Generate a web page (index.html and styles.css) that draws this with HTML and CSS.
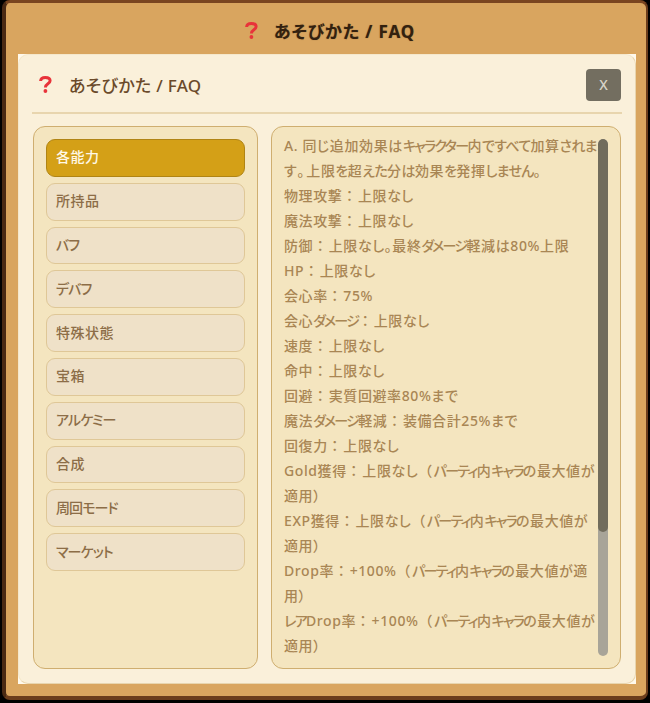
FILE: index.html
```html
<!DOCTYPE html>
<html lang="ja">
<head>
<meta charset="utf-8">
<title>あそびかた / FAQ</title>
<link rel="stylesheet" href="styles.css">
</head>
<body>
<div class="window">
  <header class="window-head">
    <svg class="q" viewBox="0 0 13 17"><path class="q-stroke" d="M1.6 5C1.8 2.6 3.6 1.5 6.3 1.5c2.8 0 4.8 1.2 4.8 3.3 0 3-4.7 3-4.7 6.6"/><circle class="q-dot" cx="6.4" cy="15" r="1.9"/></svg>
    <span class="window-title">あそびかた / FAQ</span>
  </header>
  <div class="panel-back">
  <section class="panel">
    <div class="panel-head">
      <svg class="q" viewBox="0 0 13 17"><path class="q-stroke" d="M1.6 5C1.8 2.6 3.6 1.5 6.3 1.5c2.8 0 4.8 1.2 4.8 3.3 0 3-4.7 3-4.7 6.6"/><circle class="q-dot" cx="6.4" cy="15" r="1.9"/></svg>
      <h1 class="panel-title">あそびかた / FAQ</h1>
      <button class="close">X</button>
    </div>
    <div class="columns">
      <nav class="side">
        <a class="tab active">各能力</a>
        <a class="tab">所持品</a>
        <a class="tab tab-kana">バフ</a>
        <a class="tab tab-kana">デバフ</a>
        <a class="tab">特殊状態</a>
        <a class="tab">宝箱</a>
        <a class="tab tab-kana">アルケミー</a>
        <a class="tab">合成</a>
        <a class="tab tab-kana">周回モード</a>
        <a class="tab tab-kana">マーケット</a>
      </nav>
      <div class="content">
        <div class="text">
          <p>A. 同じ追加効果は<span class="kana">キャラクター</span>内<span class="hira">ですべて</span>加算<span class="hira">されま</span><br><span class="open">す。</span>上限<span class="hira">を</span>超<span class="hira">えた</span>分<span class="hira">は</span>効果<span class="hira">を</span>発揮<span class="hira">しません。</span></p>
          <p>物理攻撃<span class="wide">：</span>上限なし</p>
          <p>魔法攻撃<span class="wide">：</span>上限なし</p>
          <p>防御<span class="wide">：</span>上限なし。最終<span class="kana">ダメージ</span>軽減は80%上限</p>
          <p>HP<span class="wide">：</span>上限なし</p>
          <p>会心率<span class="wide">：</span>75%</p>
          <p>会心<span class="kana">ダメージ</span><span class="wide">：</span>上限なし</p>
          <p>速度<span class="wide">：</span>上限なし</p>
          <p>命中<span class="wide">：</span>上限なし</p>
          <p>回避<span class="wide">：</span>実質回避率80%まで</p>
          <p>魔法<span class="kana">ダメージ</span>軽減<span class="wide">：</span>装備合計25%まで</p>
          <p>回復力<span class="wide">：</span>上限なし</p>
          <p>Gold獲得<span class="wide">：</span>上限なし<span class="wide">（</span><span class="kana">パーティ</span>内<span class="kana">キャラ</span>の最大値が<br>適用）</p>
          <p>EXP獲得<span class="wide">：</span>上限なし<span class="wide">（</span><span class="kana">パーティ</span>内<span class="kana">キャラ</span>の最大値が<br>適用）</p>
          <p>Drop率<span class="wide">：</span>+100%<span class="wide">（</span><span class="kana">パーティ</span>内<span class="kana">キャラ</span>の最大値が適<br>用）</p>
          <p><span class="kana">レア</span>Drop率<span class="wide">：</span>+100%<span class="wide">（</span><span class="kana">パーティ</span>内<span class="kana">キャラ</span>の最大値が<br>適用）</p>
        </div>
        <div class="track"><div class="thumb"></div></div>
      </div>
    </div>
  </section>
  </div>
</div>
</body>
</html>
```
FILE: styles.css
```css
* { box-sizing: border-box; }
html, body { margin: 0; height: 703px; overflow: hidden; background: #000; }
body {
  padding: 0 2px 3px;
  font-family: "Noto Sans", "Noto Sans CJK JP", sans-serif;
  font-feature-settings: "palt" 1;
  letter-spacing: 0.6px;
}
.window {
  height: 700px;
  display: flex;
  flex-direction: column;
  background: #d9a55f;
  border-style: solid;
  border-width: 3px 2px 4px 4px;
  border-color: #7a4520 #6b3d1c #6b3d1c #4a2a14;
  border-radius: 8px;
  padding: 0 10px 12px 12px;
}
.window-head {
  height: 51px;
  flex: none;
  display: flex;
  align-items: center;
  justify-content: center;
  gap: 16px;
  padding: 4px 0 0 6px;
}
.q { flex: none; width: 13px; height: 17px; }
.q-stroke { fill: none; stroke: #e8333a; stroke-width: 3; }
.q-dot { fill: #e8333a; }
.window-title {
  font-size: 17px;
  font-weight: 700;
  letter-spacing: 0.9px;
  color: #33210f;
  text-shadow: 0 0 1px rgba(51, 33, 15, 0.5);
}
.panel-back {
  flex: 1;
  display: flex;
  background: #fff9ec;
  min-height: 0;
}
.panel {
  flex: 1;
  display: flex;
  flex-direction: column;
  background: #faf0da;
  border: 1px solid #e8d5ae;
  border-top-color: #f5e8cc;
  border-left-color: #f5e8cc;
  border-radius: 10px;
  padding: 0 13px 14px;
}
.panel-head {
  height: 59px;
  flex: none;
  display: flex;
  align-items: center;
  gap: 17px;
  border-bottom: 2px solid #e8d5ae;
  padding: 2px 1px 0 7px;
}
.panel-title {
  flex: 1;
  margin: 0;
  font-size: 17px;
  font-weight: 500;
  letter-spacing: 0.3px;
  color: #6b4a2a;
}
.close {
  width: 35px;
  height: 32px;
  border: 0;
  border-radius: 4px;
  background: #736e60;
  color: #d8d4c8;
  font: 500 14px "Noto Sans", sans-serif;
  padding: 0;
}
.columns {
  flex: 1;
  display: flex;
  gap: 13px;
  margin-top: 12px;
  padding: 0 1px;
  min-height: 0;
}
.side, .content {
  background: #f4e5bf;
  border: 1px solid #cfae70;
  border-radius: 12px;
}
.side {
  width: 225px;
  flex: none;
  display: flex;
  flex-direction: column;
  gap: 6px;
  padding: 12px;
}
.tab {
  height: 37.8px;
  flex: none;
  display: flex;
  align-items: center;
  padding: 0 9px 3px;
  background: #efe1c8;
  border: 1px solid #dfc797;
  border-radius: 9px;
  font-size: 14px;
  font-weight: 500;
  letter-spacing: 0.5px;
  color: #8c6d47;
}
.tab-kana { letter-spacing: -0.9px; }
.tab.active {
  background: #d4a017;
  border-color: #b08414;
  color: #fff8e6;
}
.content {
  flex: 1;
  display: flex;
  gap: 1px;
  padding: 6px 12px 12px 12px;
  min-width: 0;
}
.text { flex: 1; min-width: 0; white-space: nowrap; }
.text p {
  margin: 0;
  font-size: 14px;
  line-height: 25px;
  font-weight: 500;
  color: #a98654;
}
.wide {
  font-feature-settings: normal;
  letter-spacing: 1.5px;
}
.kana { letter-spacing: -1.7px; }
.hira { letter-spacing: -0.7px; }
.open { letter-spacing: 2px; }
.track {
  width: 10px;
  flex: none;
  margin-top: 6px;
  border-radius: 5px;
  background: #a8a498;
  overflow: hidden;
}
.thumb {
  height: 393px;
  background: #716c5c;
  border-radius: 5px;
}
```
